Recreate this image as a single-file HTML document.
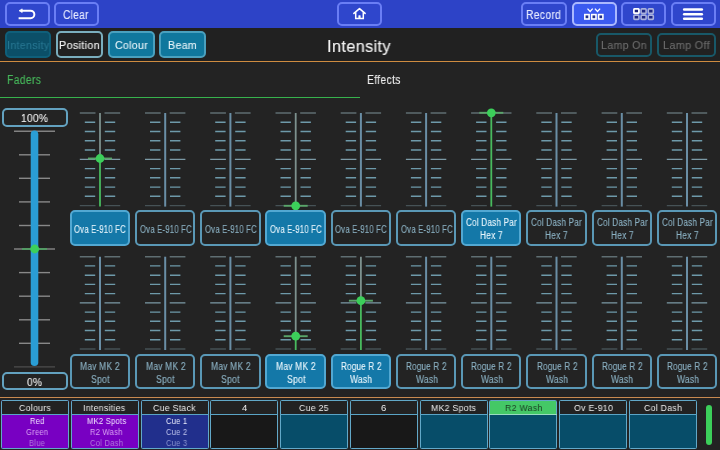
<!DOCTYPE html><html><head><meta charset="utf-8"><style>
*{margin:0;padding:0;box-sizing:border-box}
html,body{width:720px;height:450px;overflow:hidden;background:#232323;font-family:"Liberation Sans", sans-serif}
.a{position:absolute}
.t{position:absolute;white-space:nowrap;transform-origin:0 0;-webkit-text-stroke:0.12px currentColor;will-change:transform}
.tb{position:absolute;border:2px solid #6a7ef5;border-radius:5px;background:#2f46cc}
</style></head><body>
<div class="a" style="left:0;top:0;width:720px;height:28px;background:#2d43c7"></div>
<div class="tb" style="left:4.8px;top:2px;width:45.0px;height:24px;"></div>
<div class="tb" style="left:54px;top:2px;width:45px;height:24px;"></div>
<div class="tb" style="left:337px;top:2px;width:45px;height:24px;"></div>
<div class="tb" style="left:521px;top:2px;width:46px;height:24px;"></div>
<div class="tb" style="left:571.5px;top:2px;width:45.299999999999955px;height:24px;border-color:#aab8ff;background:#3b5af0"></div>
<div class="tb" style="left:620.8px;top:2px;width:45.200000000000045px;height:24px;"></div>
<div class="tb" style="left:670.8px;top:2px;width:45.0px;height:24px;"></div>
<div class="t" style="left:63.39px;top:9.10px;font-size:12px;line-height:12px;color:#e6eaff;letter-spacing:0.35px;transform:scaleX(0.848);">Clear</div>
<div class="t" style="left:526.27px;top:9.00px;font-size:12px;line-height:12px;color:#e6eaff;letter-spacing:0.35px;transform:scaleX(0.860);">Record</div>
<svg class="a" style="left:0;top:0" width="720" height="28">
<path d="M21 10.7 H30.6 A3.75 3.75 0 0 1 30.6 18.2 H18.6" fill="none" stroke="#fff" stroke-width="2"/>
<path d="M19 10.7 L22.2 8.9 L22.2 12.5 Z" fill="#fff" stroke="#fff" stroke-width="0.7" stroke-linejoin="round"/>
<path d="M353.9 13.4 L359.5 8.7 L365.1 13.4" fill="none" stroke="#fff" stroke-width="1.6" stroke-linejoin="round" stroke-linecap="round"/>
<path d="M355.7 12.2 V18.6 H363.3 V12.2" fill="none" stroke="#fff" stroke-width="1.5"/>
<rect x="358.4" y="15.2" width="2.2" height="3.4" rx="0.6" fill="#fff"/>
<g fill="#22308a" stroke="#fff" stroke-width="1.6">
<rect x="584.8" y="14.6" width="4.3" height="4.4"/><rect x="591.7" y="14.6" width="4.3" height="4.4"/><rect x="598.6" y="14.6" width="4.3" height="4.4"/>
</g>
<g fill="none" stroke="#fff" stroke-width="1.3">
<path d="M587.5 8.6 L590.1 11.5 L592.7 8.6"/><path d="M594.9 8.6 L597.5 11.5 L600.1 8.6"/>
</g>
<g fill="#1f2784" stroke="#aab2dc" stroke-width="1.6">
<rect x="633.9" y="8.9" width="5" height="4.3" rx="0.8"/><rect x="641.1" y="8.9" width="5" height="4.3" rx="0.8"/><rect x="648.3" y="8.9" width="5" height="4.3" rx="0.8"/>
<rect x="633.9" y="15.1" width="5" height="4.3" rx="0.8"/><rect x="641.1" y="15.1" width="5" height="4.3" rx="0.8"/><rect x="648.3" y="15.1" width="5" height="4.3" rx="0.8"/>
</g>
<rect x="633.9" y="8.9" width="5" height="4.3" rx="0.8" fill="#1a2078" stroke="#fff" stroke-width="1.7"/>
<g stroke="#fff" stroke-width="2.6" stroke-linecap="round">
<path d="M684.2 9.5 H701.8"/><path d="M684.2 14.2 H701.8"/><path d="M684.2 18.7 H701.8"/>
</g>
</svg>
<div class="a" style="left:0;top:28px;width:720px;height:33px;background:#212121"></div>
<div class="a" style="left:0;top:60.5px;width:720px;height:1.3px;background:#cf8c40"></div>
<div class="a" style="left:4.5px;top:31.1px;width:46.60px;height:26.70px;background:#0b4f68;border:2px solid #0f5f7a;border-radius:5px"></div>
<div class="t" style="left:6.65px;top:39.85px;font-size:11px;line-height:11px;color:#277590;letter-spacing:0.35px;transform:scaleX(0.963);">Intensity</div>
<div class="a" style="left:55.8px;top:31.2px;width:47.50px;height:26.60px;background:#212121;border:2px solid #7aaebe;border-radius:5px"></div>
<div class="t" style="left:59.14px;top:40.15px;font-size:11px;line-height:11px;color:#f2f2f2;letter-spacing:0.35px;transform:scaleX(0.978);">Position</div>
<div class="a" style="left:108px;top:31.2px;width:46.80px;height:26.60px;background:#10779d;border:2px solid #4aa0be;border-radius:5px"></div>
<div class="t" style="left:114.57px;top:40.15px;font-size:11px;line-height:11px;color:#e4f2f8;letter-spacing:0.35px;transform:scaleX(0.957);">Colour</div>
<div class="a" style="left:159px;top:31.2px;width:46.60px;height:26.60px;background:#10779d;border:2px solid #4aa0be;border-radius:5px"></div>
<div class="t" style="left:167.75px;top:40.15px;font-size:11px;line-height:11px;color:#e4f2f8;letter-spacing:0.35px;transform:scaleX(0.967);">Beam</div>
<div class="t" style="left:326.83px;top:37.98px;font-size:16.5px;line-height:16.5px;color:#f2f2f2;letter-spacing:0.35px;transform:scaleX(0.989);">Intensity</div>
<div class="a" style="left:596px;top:33px;width:56.30px;height:23.80px;background:#212121;border:2px solid #185868;border-radius:5px"></div>
<div class="t" style="left:601.15px;top:40.45px;font-size:11px;line-height:11px;color:#6c6c6c;letter-spacing:0.35px;transform:scaleX(0.965);">Lamp On</div>
<div class="a" style="left:656.8px;top:33px;width:59.00px;height:23.80px;background:#212121;border:2px solid #185868;border-radius:5px"></div>
<div class="t" style="left:662.84px;top:40.45px;font-size:11px;line-height:11px;color:#6c6c6c;letter-spacing:0.35px;transform:scaleX(0.983);">Lamp Off</div>
<div class="t" style="left:6.57px;top:73.90px;font-size:12px;line-height:12px;color:#46b65a;letter-spacing:0.35px;transform:scaleX(0.868);">Faders</div>
<div class="t" style="left:366.87px;top:73.90px;font-size:12px;line-height:12px;color:#ececec;letter-spacing:0.35px;transform:scaleX(0.866);">Effects</div>
<div class="a" style="left:0;top:96.5px;width:360px;height:1.6px;background:#37b24d"></div>
<div class="a" style="left:2px;top:108px;width:66.00px;height:19.00px;background:#232323;border:2px solid #63a2c0;border-radius:5px"></div>
<div class="t" style="left:21.34px;top:112.82px;font-size:11.5px;line-height:11.5px;color:#efefef;letter-spacing:0.35px;transform:scaleX(0.883);">100%</div>
<div class="a" style="left:2px;top:371.8px;width:65.80px;height:18.00px;background:#232323;border:2px solid #63a2c0;border-radius:5px"></div>
<div class="t" style="left:27.49px;top:376.53px;font-size:11.5px;line-height:11.5px;color:#efefef;letter-spacing:0.35px;transform:scaleX(0.882);">0%</div>
<svg class="a" style="left:0;top:0" width="720" height="450">
<path d="M14 131.2 H55" stroke="#828282" stroke-width="1.4"/>
<path d="M19 154.8 H50" stroke="#888888" stroke-width="1.4"/>
<path d="M19 178.3 H50" stroke="#888888" stroke-width="1.4"/>
<path d="M19 201.9 H50" stroke="#888888" stroke-width="1.4"/>
<path d="M19 225.5 H50" stroke="#888888" stroke-width="1.4"/>
<path d="M14 249.0 H55" stroke="#828282" stroke-width="1.4"/>
<path d="M19 272.6 H50" stroke="#888888" stroke-width="1.4"/>
<path d="M19 296.2 H50" stroke="#888888" stroke-width="1.4"/>
<path d="M19 319.8 H50" stroke="#888888" stroke-width="1.4"/>
<path d="M19 343.3 H50" stroke="#888888" stroke-width="1.4"/>
<path d="M14 366.9 H55" stroke="#4e4e4e" stroke-width="1.4"/>
<path d="M34.5 134.2 V362.2" stroke="#2a9dd4" stroke-width="7.6" stroke-linecap="round"/>
<path d="M22 249 H47" stroke="#4fa865" stroke-width="1.6"/>
<circle cx="34.7" cy="249" r="4.4" fill="#3ccf5a"/>
<path d="M79.8 113.0 H95.5 M104.5 113.0 H120.2" stroke="#5f6e72" stroke-width="1.5"/>
<path d="M84.8 122.3 H95.2 M104.8 122.3 H115.2" stroke="#6e9aaa" stroke-width="1.4"/>
<path d="M84.8 131.5 H95.2 M104.8 131.5 H115.2" stroke="#6e9aaa" stroke-width="1.4"/>
<path d="M84.8 140.8 H95.2 M104.8 140.8 H115.2" stroke="#6e9aaa" stroke-width="1.4"/>
<path d="M84.8 150.0 H95.2 M104.8 150.0 H115.2" stroke="#6e9aaa" stroke-width="1.4"/>
<path d="M79.8 159.3 H95.5 M104.5 159.3 H120.2" stroke="#7c9aa6" stroke-width="1.2"/>
<path d="M84.8 168.6 H95.2 M104.8 168.6 H115.2" stroke="#6e9aaa" stroke-width="1.4"/>
<path d="M84.8 177.8 H95.2 M104.8 177.8 H115.2" stroke="#6e9aaa" stroke-width="1.4"/>
<path d="M84.8 187.1 H95.2 M104.8 187.1 H115.2" stroke="#6e9aaa" stroke-width="1.4"/>
<path d="M84.8 196.3 H95.2 M104.8 196.3 H115.2" stroke="#6e9aaa" stroke-width="1.4"/>
<path d="M79.8 205.6 H95.5 M104.5 205.6 H120.2" stroke="#465256" stroke-width="1.3"/>
<path d="M100.0 113.0 V158.5" stroke="#7d918e" stroke-width="1.8"/>
<path d="M100.0 158.5 V206.6" stroke="#48ba5e" stroke-width="1.8"/>
<path d="M88.0 158.5 H112.0" stroke="#5aa56a" stroke-width="1.9"/>
<circle cx="100.0" cy="158.5" r="4.4" fill="#3ccf5a"/>
<path d="M79.8 256.7 H95.5 M104.5 256.7 H120.2" stroke="#5f6e72" stroke-width="1.5"/>
<path d="M84.8 265.9 H95.2 M104.8 265.9 H115.2" stroke="#6e9aaa" stroke-width="1.4"/>
<path d="M84.8 275.2 H95.2 M104.8 275.2 H115.2" stroke="#6e9aaa" stroke-width="1.4"/>
<path d="M84.8 284.4 H95.2 M104.8 284.4 H115.2" stroke="#6e9aaa" stroke-width="1.4"/>
<path d="M84.8 293.6 H95.2 M104.8 293.6 H115.2" stroke="#6e9aaa" stroke-width="1.4"/>
<path d="M79.8 302.9 H95.5 M104.5 302.9 H120.2" stroke="#7c9aa6" stroke-width="1.2"/>
<path d="M84.8 312.1 H95.2 M104.8 312.1 H115.2" stroke="#6e9aaa" stroke-width="1.4"/>
<path d="M84.8 321.3 H95.2 M104.8 321.3 H115.2" stroke="#6e9aaa" stroke-width="1.4"/>
<path d="M84.8 330.5 H95.2 M104.8 330.5 H115.2" stroke="#6e9aaa" stroke-width="1.4"/>
<path d="M84.8 339.8 H95.2 M104.8 339.8 H115.2" stroke="#6e9aaa" stroke-width="1.4"/>
<path d="M79.8 349.0 H95.5 M104.5 349.0 H120.2" stroke="#465256" stroke-width="1.3"/>
<path d="M100.0 256.7 V350.0" stroke="#6a8ea5" stroke-width="2"/>
<path d="M145.0 113.0 H160.7 M169.7 113.0 H185.4" stroke="#5f6e72" stroke-width="1.5"/>
<path d="M150.0 122.3 H160.4 M170.0 122.3 H180.4" stroke="#6e9aaa" stroke-width="1.4"/>
<path d="M150.0 131.5 H160.4 M170.0 131.5 H180.4" stroke="#6e9aaa" stroke-width="1.4"/>
<path d="M150.0 140.8 H160.4 M170.0 140.8 H180.4" stroke="#6e9aaa" stroke-width="1.4"/>
<path d="M150.0 150.0 H160.4 M170.0 150.0 H180.4" stroke="#6e9aaa" stroke-width="1.4"/>
<path d="M145.0 159.3 H160.7 M169.7 159.3 H185.4" stroke="#7c9aa6" stroke-width="1.2"/>
<path d="M150.0 168.6 H160.4 M170.0 168.6 H180.4" stroke="#6e9aaa" stroke-width="1.4"/>
<path d="M150.0 177.8 H160.4 M170.0 177.8 H180.4" stroke="#6e9aaa" stroke-width="1.4"/>
<path d="M150.0 187.1 H160.4 M170.0 187.1 H180.4" stroke="#6e9aaa" stroke-width="1.4"/>
<path d="M150.0 196.3 H160.4 M170.0 196.3 H180.4" stroke="#6e9aaa" stroke-width="1.4"/>
<path d="M145.0 205.6 H160.7 M169.7 205.6 H185.4" stroke="#465256" stroke-width="1.3"/>
<path d="M165.2 113.0 V206.6" stroke="#6a8ea5" stroke-width="2"/>
<path d="M145.0 256.7 H160.7 M169.7 256.7 H185.4" stroke="#5f6e72" stroke-width="1.5"/>
<path d="M150.0 265.9 H160.4 M170.0 265.9 H180.4" stroke="#6e9aaa" stroke-width="1.4"/>
<path d="M150.0 275.2 H160.4 M170.0 275.2 H180.4" stroke="#6e9aaa" stroke-width="1.4"/>
<path d="M150.0 284.4 H160.4 M170.0 284.4 H180.4" stroke="#6e9aaa" stroke-width="1.4"/>
<path d="M150.0 293.6 H160.4 M170.0 293.6 H180.4" stroke="#6e9aaa" stroke-width="1.4"/>
<path d="M145.0 302.9 H160.7 M169.7 302.9 H185.4" stroke="#7c9aa6" stroke-width="1.2"/>
<path d="M150.0 312.1 H160.4 M170.0 312.1 H180.4" stroke="#6e9aaa" stroke-width="1.4"/>
<path d="M150.0 321.3 H160.4 M170.0 321.3 H180.4" stroke="#6e9aaa" stroke-width="1.4"/>
<path d="M150.0 330.5 H160.4 M170.0 330.5 H180.4" stroke="#6e9aaa" stroke-width="1.4"/>
<path d="M150.0 339.8 H160.4 M170.0 339.8 H180.4" stroke="#6e9aaa" stroke-width="1.4"/>
<path d="M145.0 349.0 H160.7 M169.7 349.0 H185.4" stroke="#465256" stroke-width="1.3"/>
<path d="M165.2 256.7 V350.0" stroke="#6a8ea5" stroke-width="2"/>
<path d="M210.2 113.0 H225.9 M234.9 113.0 H250.6" stroke="#5f6e72" stroke-width="1.5"/>
<path d="M215.2 122.3 H225.6 M235.2 122.3 H245.6" stroke="#6e9aaa" stroke-width="1.4"/>
<path d="M215.2 131.5 H225.6 M235.2 131.5 H245.6" stroke="#6e9aaa" stroke-width="1.4"/>
<path d="M215.2 140.8 H225.6 M235.2 140.8 H245.6" stroke="#6e9aaa" stroke-width="1.4"/>
<path d="M215.2 150.0 H225.6 M235.2 150.0 H245.6" stroke="#6e9aaa" stroke-width="1.4"/>
<path d="M210.2 159.3 H225.9 M234.9 159.3 H250.6" stroke="#7c9aa6" stroke-width="1.2"/>
<path d="M215.2 168.6 H225.6 M235.2 168.6 H245.6" stroke="#6e9aaa" stroke-width="1.4"/>
<path d="M215.2 177.8 H225.6 M235.2 177.8 H245.6" stroke="#6e9aaa" stroke-width="1.4"/>
<path d="M215.2 187.1 H225.6 M235.2 187.1 H245.6" stroke="#6e9aaa" stroke-width="1.4"/>
<path d="M215.2 196.3 H225.6 M235.2 196.3 H245.6" stroke="#6e9aaa" stroke-width="1.4"/>
<path d="M210.2 205.6 H225.9 M234.9 205.6 H250.6" stroke="#465256" stroke-width="1.3"/>
<path d="M230.4 113.0 V206.6" stroke="#6a8ea5" stroke-width="2"/>
<path d="M210.2 256.7 H225.9 M234.9 256.7 H250.6" stroke="#5f6e72" stroke-width="1.5"/>
<path d="M215.2 265.9 H225.6 M235.2 265.9 H245.6" stroke="#6e9aaa" stroke-width="1.4"/>
<path d="M215.2 275.2 H225.6 M235.2 275.2 H245.6" stroke="#6e9aaa" stroke-width="1.4"/>
<path d="M215.2 284.4 H225.6 M235.2 284.4 H245.6" stroke="#6e9aaa" stroke-width="1.4"/>
<path d="M215.2 293.6 H225.6 M235.2 293.6 H245.6" stroke="#6e9aaa" stroke-width="1.4"/>
<path d="M210.2 302.9 H225.9 M234.9 302.9 H250.6" stroke="#7c9aa6" stroke-width="1.2"/>
<path d="M215.2 312.1 H225.6 M235.2 312.1 H245.6" stroke="#6e9aaa" stroke-width="1.4"/>
<path d="M215.2 321.3 H225.6 M235.2 321.3 H245.6" stroke="#6e9aaa" stroke-width="1.4"/>
<path d="M215.2 330.5 H225.6 M235.2 330.5 H245.6" stroke="#6e9aaa" stroke-width="1.4"/>
<path d="M215.2 339.8 H225.6 M235.2 339.8 H245.6" stroke="#6e9aaa" stroke-width="1.4"/>
<path d="M210.2 349.0 H225.9 M234.9 349.0 H250.6" stroke="#465256" stroke-width="1.3"/>
<path d="M230.4 256.7 V350.0" stroke="#6a8ea5" stroke-width="2"/>
<path d="M275.5 113.0 H291.2 M300.2 113.0 H315.9" stroke="#5f6e72" stroke-width="1.5"/>
<path d="M280.5 122.3 H290.9 M300.5 122.3 H310.9" stroke="#6e9aaa" stroke-width="1.4"/>
<path d="M280.5 131.5 H290.9 M300.5 131.5 H310.9" stroke="#6e9aaa" stroke-width="1.4"/>
<path d="M280.5 140.8 H290.9 M300.5 140.8 H310.9" stroke="#6e9aaa" stroke-width="1.4"/>
<path d="M280.5 150.0 H290.9 M300.5 150.0 H310.9" stroke="#6e9aaa" stroke-width="1.4"/>
<path d="M275.5 159.3 H291.2 M300.2 159.3 H315.9" stroke="#7c9aa6" stroke-width="1.2"/>
<path d="M280.5 168.6 H290.9 M300.5 168.6 H310.9" stroke="#6e9aaa" stroke-width="1.4"/>
<path d="M280.5 177.8 H290.9 M300.5 177.8 H310.9" stroke="#6e9aaa" stroke-width="1.4"/>
<path d="M280.5 187.1 H290.9 M300.5 187.1 H310.9" stroke="#6e9aaa" stroke-width="1.4"/>
<path d="M280.5 196.3 H290.9 M300.5 196.3 H310.9" stroke="#6e9aaa" stroke-width="1.4"/>
<path d="M275.5 205.6 H291.2 M300.2 205.6 H315.9" stroke="#465256" stroke-width="1.3"/>
<path d="M295.7 113.0 V205.8" stroke="#7d918e" stroke-width="1.8"/>
<path d="M295.7 205.8 V206.6" stroke="#48ba5e" stroke-width="1.8"/>
<path d="M283.7 205.8 H307.7" stroke="#5aa56a" stroke-width="1.9"/>
<circle cx="295.7" cy="205.8" r="4.4" fill="#3ccf5a"/>
<path d="M275.5 256.7 H291.2 M300.2 256.7 H315.9" stroke="#5f6e72" stroke-width="1.5"/>
<path d="M280.5 265.9 H290.9 M300.5 265.9 H310.9" stroke="#6e9aaa" stroke-width="1.4"/>
<path d="M280.5 275.2 H290.9 M300.5 275.2 H310.9" stroke="#6e9aaa" stroke-width="1.4"/>
<path d="M280.5 284.4 H290.9 M300.5 284.4 H310.9" stroke="#6e9aaa" stroke-width="1.4"/>
<path d="M280.5 293.6 H290.9 M300.5 293.6 H310.9" stroke="#6e9aaa" stroke-width="1.4"/>
<path d="M275.5 302.9 H291.2 M300.2 302.9 H315.9" stroke="#7c9aa6" stroke-width="1.2"/>
<path d="M280.5 312.1 H290.9 M300.5 312.1 H310.9" stroke="#6e9aaa" stroke-width="1.4"/>
<path d="M280.5 321.3 H290.9 M300.5 321.3 H310.9" stroke="#6e9aaa" stroke-width="1.4"/>
<path d="M280.5 330.5 H290.9 M300.5 330.5 H310.9" stroke="#6e9aaa" stroke-width="1.4"/>
<path d="M280.5 339.8 H290.9 M300.5 339.8 H310.9" stroke="#6e9aaa" stroke-width="1.4"/>
<path d="M275.5 349.0 H291.2 M300.2 349.0 H315.9" stroke="#465256" stroke-width="1.3"/>
<path d="M295.7 256.7 V336.2" stroke="#7d918e" stroke-width="1.8"/>
<path d="M295.7 336.2 V350.0" stroke="#48ba5e" stroke-width="1.8"/>
<path d="M283.7 336.2 H307.7" stroke="#5aa56a" stroke-width="1.9"/>
<circle cx="295.7" cy="336.2" r="4.4" fill="#3ccf5a"/>
<path d="M340.7 113.0 H356.4 M365.4 113.0 H381.1" stroke="#5f6e72" stroke-width="1.5"/>
<path d="M345.7 122.3 H356.1 M365.7 122.3 H376.1" stroke="#6e9aaa" stroke-width="1.4"/>
<path d="M345.7 131.5 H356.1 M365.7 131.5 H376.1" stroke="#6e9aaa" stroke-width="1.4"/>
<path d="M345.7 140.8 H356.1 M365.7 140.8 H376.1" stroke="#6e9aaa" stroke-width="1.4"/>
<path d="M345.7 150.0 H356.1 M365.7 150.0 H376.1" stroke="#6e9aaa" stroke-width="1.4"/>
<path d="M340.7 159.3 H356.4 M365.4 159.3 H381.1" stroke="#7c9aa6" stroke-width="1.2"/>
<path d="M345.7 168.6 H356.1 M365.7 168.6 H376.1" stroke="#6e9aaa" stroke-width="1.4"/>
<path d="M345.7 177.8 H356.1 M365.7 177.8 H376.1" stroke="#6e9aaa" stroke-width="1.4"/>
<path d="M345.7 187.1 H356.1 M365.7 187.1 H376.1" stroke="#6e9aaa" stroke-width="1.4"/>
<path d="M345.7 196.3 H356.1 M365.7 196.3 H376.1" stroke="#6e9aaa" stroke-width="1.4"/>
<path d="M340.7 205.6 H356.4 M365.4 205.6 H381.1" stroke="#465256" stroke-width="1.3"/>
<path d="M360.9 113.0 V206.6" stroke="#6a8ea5" stroke-width="2"/>
<path d="M340.7 256.7 H356.4 M365.4 256.7 H381.1" stroke="#5f6e72" stroke-width="1.5"/>
<path d="M345.7 265.9 H356.1 M365.7 265.9 H376.1" stroke="#6e9aaa" stroke-width="1.4"/>
<path d="M345.7 275.2 H356.1 M365.7 275.2 H376.1" stroke="#6e9aaa" stroke-width="1.4"/>
<path d="M345.7 284.4 H356.1 M365.7 284.4 H376.1" stroke="#6e9aaa" stroke-width="1.4"/>
<path d="M345.7 293.6 H356.1 M365.7 293.6 H376.1" stroke="#6e9aaa" stroke-width="1.4"/>
<path d="M340.7 302.9 H356.4 M365.4 302.9 H381.1" stroke="#7c9aa6" stroke-width="1.2"/>
<path d="M345.7 312.1 H356.1 M365.7 312.1 H376.1" stroke="#6e9aaa" stroke-width="1.4"/>
<path d="M345.7 321.3 H356.1 M365.7 321.3 H376.1" stroke="#6e9aaa" stroke-width="1.4"/>
<path d="M345.7 330.5 H356.1 M365.7 330.5 H376.1" stroke="#6e9aaa" stroke-width="1.4"/>
<path d="M345.7 339.8 H356.1 M365.7 339.8 H376.1" stroke="#6e9aaa" stroke-width="1.4"/>
<path d="M340.7 349.0 H356.4 M365.4 349.0 H381.1" stroke="#465256" stroke-width="1.3"/>
<path d="M360.9 256.7 V300.7" stroke="#7d918e" stroke-width="1.8"/>
<path d="M360.9 300.7 V350.0" stroke="#48ba5e" stroke-width="1.8"/>
<path d="M348.9 300.7 H372.9" stroke="#5aa56a" stroke-width="1.9"/>
<circle cx="360.9" cy="300.7" r="4.4" fill="#3ccf5a"/>
<path d="M405.9 113.0 H421.6 M430.6 113.0 H446.3" stroke="#5f6e72" stroke-width="1.5"/>
<path d="M410.9 122.3 H421.3 M430.9 122.3 H441.3" stroke="#6e9aaa" stroke-width="1.4"/>
<path d="M410.9 131.5 H421.3 M430.9 131.5 H441.3" stroke="#6e9aaa" stroke-width="1.4"/>
<path d="M410.9 140.8 H421.3 M430.9 140.8 H441.3" stroke="#6e9aaa" stroke-width="1.4"/>
<path d="M410.9 150.0 H421.3 M430.9 150.0 H441.3" stroke="#6e9aaa" stroke-width="1.4"/>
<path d="M405.9 159.3 H421.6 M430.6 159.3 H446.3" stroke="#7c9aa6" stroke-width="1.2"/>
<path d="M410.9 168.6 H421.3 M430.9 168.6 H441.3" stroke="#6e9aaa" stroke-width="1.4"/>
<path d="M410.9 177.8 H421.3 M430.9 177.8 H441.3" stroke="#6e9aaa" stroke-width="1.4"/>
<path d="M410.9 187.1 H421.3 M430.9 187.1 H441.3" stroke="#6e9aaa" stroke-width="1.4"/>
<path d="M410.9 196.3 H421.3 M430.9 196.3 H441.3" stroke="#6e9aaa" stroke-width="1.4"/>
<path d="M405.9 205.6 H421.6 M430.6 205.6 H446.3" stroke="#465256" stroke-width="1.3"/>
<path d="M426.1 113.0 V206.6" stroke="#6a8ea5" stroke-width="2"/>
<path d="M405.9 256.7 H421.6 M430.6 256.7 H446.3" stroke="#5f6e72" stroke-width="1.5"/>
<path d="M410.9 265.9 H421.3 M430.9 265.9 H441.3" stroke="#6e9aaa" stroke-width="1.4"/>
<path d="M410.9 275.2 H421.3 M430.9 275.2 H441.3" stroke="#6e9aaa" stroke-width="1.4"/>
<path d="M410.9 284.4 H421.3 M430.9 284.4 H441.3" stroke="#6e9aaa" stroke-width="1.4"/>
<path d="M410.9 293.6 H421.3 M430.9 293.6 H441.3" stroke="#6e9aaa" stroke-width="1.4"/>
<path d="M405.9 302.9 H421.6 M430.6 302.9 H446.3" stroke="#7c9aa6" stroke-width="1.2"/>
<path d="M410.9 312.1 H421.3 M430.9 312.1 H441.3" stroke="#6e9aaa" stroke-width="1.4"/>
<path d="M410.9 321.3 H421.3 M430.9 321.3 H441.3" stroke="#6e9aaa" stroke-width="1.4"/>
<path d="M410.9 330.5 H421.3 M430.9 330.5 H441.3" stroke="#6e9aaa" stroke-width="1.4"/>
<path d="M410.9 339.8 H421.3 M430.9 339.8 H441.3" stroke="#6e9aaa" stroke-width="1.4"/>
<path d="M405.9 349.0 H421.6 M430.6 349.0 H446.3" stroke="#465256" stroke-width="1.3"/>
<path d="M426.1 256.7 V350.0" stroke="#6a8ea5" stroke-width="2"/>
<path d="M471.1 113.0 H486.8 M495.8 113.0 H511.5" stroke="#5f6e72" stroke-width="1.5"/>
<path d="M476.1 122.3 H486.5 M496.1 122.3 H506.5" stroke="#6e9aaa" stroke-width="1.4"/>
<path d="M476.1 131.5 H486.5 M496.1 131.5 H506.5" stroke="#6e9aaa" stroke-width="1.4"/>
<path d="M476.1 140.8 H486.5 M496.1 140.8 H506.5" stroke="#6e9aaa" stroke-width="1.4"/>
<path d="M476.1 150.0 H486.5 M496.1 150.0 H506.5" stroke="#6e9aaa" stroke-width="1.4"/>
<path d="M471.1 159.3 H486.8 M495.8 159.3 H511.5" stroke="#7c9aa6" stroke-width="1.2"/>
<path d="M476.1 168.6 H486.5 M496.1 168.6 H506.5" stroke="#6e9aaa" stroke-width="1.4"/>
<path d="M476.1 177.8 H486.5 M496.1 177.8 H506.5" stroke="#6e9aaa" stroke-width="1.4"/>
<path d="M476.1 187.1 H486.5 M496.1 187.1 H506.5" stroke="#6e9aaa" stroke-width="1.4"/>
<path d="M476.1 196.3 H486.5 M496.1 196.3 H506.5" stroke="#6e9aaa" stroke-width="1.4"/>
<path d="M471.1 205.6 H486.8 M495.8 205.6 H511.5" stroke="#465256" stroke-width="1.3"/>
<path d="M491.3 113.0 V112.8" stroke="#7d918e" stroke-width="1.8"/>
<path d="M491.3 112.8 V206.6" stroke="#48ba5e" stroke-width="1.8"/>
<path d="M479.3 112.8 H503.3" stroke="#5aa56a" stroke-width="1.9"/>
<circle cx="491.3" cy="112.8" r="4.4" fill="#3ccf5a"/>
<path d="M471.1 256.7 H486.8 M495.8 256.7 H511.5" stroke="#5f6e72" stroke-width="1.5"/>
<path d="M476.1 265.9 H486.5 M496.1 265.9 H506.5" stroke="#6e9aaa" stroke-width="1.4"/>
<path d="M476.1 275.2 H486.5 M496.1 275.2 H506.5" stroke="#6e9aaa" stroke-width="1.4"/>
<path d="M476.1 284.4 H486.5 M496.1 284.4 H506.5" stroke="#6e9aaa" stroke-width="1.4"/>
<path d="M476.1 293.6 H486.5 M496.1 293.6 H506.5" stroke="#6e9aaa" stroke-width="1.4"/>
<path d="M471.1 302.9 H486.8 M495.8 302.9 H511.5" stroke="#7c9aa6" stroke-width="1.2"/>
<path d="M476.1 312.1 H486.5 M496.1 312.1 H506.5" stroke="#6e9aaa" stroke-width="1.4"/>
<path d="M476.1 321.3 H486.5 M496.1 321.3 H506.5" stroke="#6e9aaa" stroke-width="1.4"/>
<path d="M476.1 330.5 H486.5 M496.1 330.5 H506.5" stroke="#6e9aaa" stroke-width="1.4"/>
<path d="M476.1 339.8 H486.5 M496.1 339.8 H506.5" stroke="#6e9aaa" stroke-width="1.4"/>
<path d="M471.1 349.0 H486.8 M495.8 349.0 H511.5" stroke="#465256" stroke-width="1.3"/>
<path d="M491.3 256.7 V350.0" stroke="#6a8ea5" stroke-width="2"/>
<path d="M536.3 113.0 H552.0 M561.0 113.0 H576.7" stroke="#5f6e72" stroke-width="1.5"/>
<path d="M541.3 122.3 H551.7 M561.3 122.3 H571.7" stroke="#6e9aaa" stroke-width="1.4"/>
<path d="M541.3 131.5 H551.7 M561.3 131.5 H571.7" stroke="#6e9aaa" stroke-width="1.4"/>
<path d="M541.3 140.8 H551.7 M561.3 140.8 H571.7" stroke="#6e9aaa" stroke-width="1.4"/>
<path d="M541.3 150.0 H551.7 M561.3 150.0 H571.7" stroke="#6e9aaa" stroke-width="1.4"/>
<path d="M536.3 159.3 H552.0 M561.0 159.3 H576.7" stroke="#7c9aa6" stroke-width="1.2"/>
<path d="M541.3 168.6 H551.7 M561.3 168.6 H571.7" stroke="#6e9aaa" stroke-width="1.4"/>
<path d="M541.3 177.8 H551.7 M561.3 177.8 H571.7" stroke="#6e9aaa" stroke-width="1.4"/>
<path d="M541.3 187.1 H551.7 M561.3 187.1 H571.7" stroke="#6e9aaa" stroke-width="1.4"/>
<path d="M541.3 196.3 H551.7 M561.3 196.3 H571.7" stroke="#6e9aaa" stroke-width="1.4"/>
<path d="M536.3 205.6 H552.0 M561.0 205.6 H576.7" stroke="#465256" stroke-width="1.3"/>
<path d="M556.5 113.0 V206.6" stroke="#6a8ea5" stroke-width="2"/>
<path d="M536.3 256.7 H552.0 M561.0 256.7 H576.7" stroke="#5f6e72" stroke-width="1.5"/>
<path d="M541.3 265.9 H551.7 M561.3 265.9 H571.7" stroke="#6e9aaa" stroke-width="1.4"/>
<path d="M541.3 275.2 H551.7 M561.3 275.2 H571.7" stroke="#6e9aaa" stroke-width="1.4"/>
<path d="M541.3 284.4 H551.7 M561.3 284.4 H571.7" stroke="#6e9aaa" stroke-width="1.4"/>
<path d="M541.3 293.6 H551.7 M561.3 293.6 H571.7" stroke="#6e9aaa" stroke-width="1.4"/>
<path d="M536.3 302.9 H552.0 M561.0 302.9 H576.7" stroke="#7c9aa6" stroke-width="1.2"/>
<path d="M541.3 312.1 H551.7 M561.3 312.1 H571.7" stroke="#6e9aaa" stroke-width="1.4"/>
<path d="M541.3 321.3 H551.7 M561.3 321.3 H571.7" stroke="#6e9aaa" stroke-width="1.4"/>
<path d="M541.3 330.5 H551.7 M561.3 330.5 H571.7" stroke="#6e9aaa" stroke-width="1.4"/>
<path d="M541.3 339.8 H551.7 M561.3 339.8 H571.7" stroke="#6e9aaa" stroke-width="1.4"/>
<path d="M536.3 349.0 H552.0 M561.0 349.0 H576.7" stroke="#465256" stroke-width="1.3"/>
<path d="M556.5 256.7 V350.0" stroke="#6a8ea5" stroke-width="2"/>
<path d="M601.6 113.0 H617.3 M626.3 113.0 H642.0" stroke="#5f6e72" stroke-width="1.5"/>
<path d="M606.6 122.3 H617.0 M626.6 122.3 H637.0" stroke="#6e9aaa" stroke-width="1.4"/>
<path d="M606.6 131.5 H617.0 M626.6 131.5 H637.0" stroke="#6e9aaa" stroke-width="1.4"/>
<path d="M606.6 140.8 H617.0 M626.6 140.8 H637.0" stroke="#6e9aaa" stroke-width="1.4"/>
<path d="M606.6 150.0 H617.0 M626.6 150.0 H637.0" stroke="#6e9aaa" stroke-width="1.4"/>
<path d="M601.6 159.3 H617.3 M626.3 159.3 H642.0" stroke="#7c9aa6" stroke-width="1.2"/>
<path d="M606.6 168.6 H617.0 M626.6 168.6 H637.0" stroke="#6e9aaa" stroke-width="1.4"/>
<path d="M606.6 177.8 H617.0 M626.6 177.8 H637.0" stroke="#6e9aaa" stroke-width="1.4"/>
<path d="M606.6 187.1 H617.0 M626.6 187.1 H637.0" stroke="#6e9aaa" stroke-width="1.4"/>
<path d="M606.6 196.3 H617.0 M626.6 196.3 H637.0" stroke="#6e9aaa" stroke-width="1.4"/>
<path d="M601.6 205.6 H617.3 M626.3 205.6 H642.0" stroke="#465256" stroke-width="1.3"/>
<path d="M621.8 113.0 V206.6" stroke="#6a8ea5" stroke-width="2"/>
<path d="M601.6 256.7 H617.3 M626.3 256.7 H642.0" stroke="#5f6e72" stroke-width="1.5"/>
<path d="M606.6 265.9 H617.0 M626.6 265.9 H637.0" stroke="#6e9aaa" stroke-width="1.4"/>
<path d="M606.6 275.2 H617.0 M626.6 275.2 H637.0" stroke="#6e9aaa" stroke-width="1.4"/>
<path d="M606.6 284.4 H617.0 M626.6 284.4 H637.0" stroke="#6e9aaa" stroke-width="1.4"/>
<path d="M606.6 293.6 H617.0 M626.6 293.6 H637.0" stroke="#6e9aaa" stroke-width="1.4"/>
<path d="M601.6 302.9 H617.3 M626.3 302.9 H642.0" stroke="#7c9aa6" stroke-width="1.2"/>
<path d="M606.6 312.1 H617.0 M626.6 312.1 H637.0" stroke="#6e9aaa" stroke-width="1.4"/>
<path d="M606.6 321.3 H617.0 M626.6 321.3 H637.0" stroke="#6e9aaa" stroke-width="1.4"/>
<path d="M606.6 330.5 H617.0 M626.6 330.5 H637.0" stroke="#6e9aaa" stroke-width="1.4"/>
<path d="M606.6 339.8 H617.0 M626.6 339.8 H637.0" stroke="#6e9aaa" stroke-width="1.4"/>
<path d="M601.6 349.0 H617.3 M626.3 349.0 H642.0" stroke="#465256" stroke-width="1.3"/>
<path d="M621.8 256.7 V350.0" stroke="#6a8ea5" stroke-width="2"/>
<path d="M666.8 113.0 H682.5 M691.5 113.0 H707.2" stroke="#5f6e72" stroke-width="1.5"/>
<path d="M671.8 122.3 H682.2 M691.8 122.3 H702.2" stroke="#6e9aaa" stroke-width="1.4"/>
<path d="M671.8 131.5 H682.2 M691.8 131.5 H702.2" stroke="#6e9aaa" stroke-width="1.4"/>
<path d="M671.8 140.8 H682.2 M691.8 140.8 H702.2" stroke="#6e9aaa" stroke-width="1.4"/>
<path d="M671.8 150.0 H682.2 M691.8 150.0 H702.2" stroke="#6e9aaa" stroke-width="1.4"/>
<path d="M666.8 159.3 H682.5 M691.5 159.3 H707.2" stroke="#7c9aa6" stroke-width="1.2"/>
<path d="M671.8 168.6 H682.2 M691.8 168.6 H702.2" stroke="#6e9aaa" stroke-width="1.4"/>
<path d="M671.8 177.8 H682.2 M691.8 177.8 H702.2" stroke="#6e9aaa" stroke-width="1.4"/>
<path d="M671.8 187.1 H682.2 M691.8 187.1 H702.2" stroke="#6e9aaa" stroke-width="1.4"/>
<path d="M671.8 196.3 H682.2 M691.8 196.3 H702.2" stroke="#6e9aaa" stroke-width="1.4"/>
<path d="M666.8 205.6 H682.5 M691.5 205.6 H707.2" stroke="#465256" stroke-width="1.3"/>
<path d="M687.0 113.0 V206.6" stroke="#6a8ea5" stroke-width="2"/>
<path d="M666.8 256.7 H682.5 M691.5 256.7 H707.2" stroke="#5f6e72" stroke-width="1.5"/>
<path d="M671.8 265.9 H682.2 M691.8 265.9 H702.2" stroke="#6e9aaa" stroke-width="1.4"/>
<path d="M671.8 275.2 H682.2 M691.8 275.2 H702.2" stroke="#6e9aaa" stroke-width="1.4"/>
<path d="M671.8 284.4 H682.2 M691.8 284.4 H702.2" stroke="#6e9aaa" stroke-width="1.4"/>
<path d="M671.8 293.6 H682.2 M691.8 293.6 H702.2" stroke="#6e9aaa" stroke-width="1.4"/>
<path d="M666.8 302.9 H682.5 M691.5 302.9 H707.2" stroke="#7c9aa6" stroke-width="1.2"/>
<path d="M671.8 312.1 H682.2 M691.8 312.1 H702.2" stroke="#6e9aaa" stroke-width="1.4"/>
<path d="M671.8 321.3 H682.2 M691.8 321.3 H702.2" stroke="#6e9aaa" stroke-width="1.4"/>
<path d="M671.8 330.5 H682.2 M691.8 330.5 H702.2" stroke="#6e9aaa" stroke-width="1.4"/>
<path d="M671.8 339.8 H682.2 M691.8 339.8 H702.2" stroke="#6e9aaa" stroke-width="1.4"/>
<path d="M666.8 349.0 H682.5 M691.5 349.0 H707.2" stroke="#465256" stroke-width="1.3"/>
<path d="M687.0 256.7 V350.0" stroke="#6a8ea5" stroke-width="2"/>
</svg>
<div class="a" style="left:69.80px;top:210.2px;width:60.3px;height:36.00px;background:#1478a8;border:2px solid #52a8d2;border-radius:5px"></div><div class="t" style="left:74.45px;top:224.70px;font-size:10.0px;line-height:10.0px;color:#e6f4fb;letter-spacing:0.3px;transform:scaleX(0.768);-webkit-text-stroke:0.15px currentColor;">Ova E-910 FC</div>
<div class="a" style="left:69.80px;top:353.7px;width:60.3px;height:35.60px;background:#232323;border:2px solid #5a98b6;border-radius:5px"></div><div class="t" style="left:80.38px;top:361.60px;font-size:10.0px;line-height:10.0px;color:#8ab0c2;letter-spacing:0.3px;transform:scaleX(0.841);-webkit-text-stroke:0.15px currentColor;">Mav MK 2</div><div class="t" style="left:90.86px;top:374.50px;font-size:10.0px;line-height:10.0px;color:#8ab0c2;letter-spacing:0.3px;transform:scaleX(0.864);-webkit-text-stroke:0.15px currentColor;">Spot</div>
<div class="a" style="left:135.02px;top:210.2px;width:60.3px;height:36.00px;background:#232323;border:2px solid #5a98b6;border-radius:5px"></div><div class="t" style="left:139.67px;top:224.70px;font-size:10.0px;line-height:10.0px;color:#8ab0c2;letter-spacing:0.3px;transform:scaleX(0.768);-webkit-text-stroke:0.15px currentColor;">Ova E-910 FC</div>
<div class="a" style="left:135.02px;top:353.7px;width:60.3px;height:35.60px;background:#232323;border:2px solid #5a98b6;border-radius:5px"></div><div class="t" style="left:145.60px;top:361.60px;font-size:10.0px;line-height:10.0px;color:#8ab0c2;letter-spacing:0.3px;transform:scaleX(0.841);-webkit-text-stroke:0.15px currentColor;">Mav MK 2</div><div class="t" style="left:156.08px;top:374.50px;font-size:10.0px;line-height:10.0px;color:#8ab0c2;letter-spacing:0.3px;transform:scaleX(0.864);-webkit-text-stroke:0.15px currentColor;">Spot</div>
<div class="a" style="left:200.24px;top:210.2px;width:60.3px;height:36.00px;background:#232323;border:2px solid #5a98b6;border-radius:5px"></div><div class="t" style="left:204.89px;top:224.70px;font-size:10.0px;line-height:10.0px;color:#8ab0c2;letter-spacing:0.3px;transform:scaleX(0.768);-webkit-text-stroke:0.15px currentColor;">Ova E-910 FC</div>
<div class="a" style="left:200.24px;top:353.7px;width:60.3px;height:35.60px;background:#232323;border:2px solid #5a98b6;border-radius:5px"></div><div class="t" style="left:210.82px;top:361.60px;font-size:10.0px;line-height:10.0px;color:#8ab0c2;letter-spacing:0.3px;transform:scaleX(0.841);-webkit-text-stroke:0.15px currentColor;">Mav MK 2</div><div class="t" style="left:221.30px;top:374.50px;font-size:10.0px;line-height:10.0px;color:#8ab0c2;letter-spacing:0.3px;transform:scaleX(0.864);-webkit-text-stroke:0.15px currentColor;">Spot</div>
<div class="a" style="left:265.46px;top:210.2px;width:60.3px;height:36.00px;background:#1478a8;border:2px solid #52a8d2;border-radius:5px"></div><div class="t" style="left:270.11px;top:224.70px;font-size:10.0px;line-height:10.0px;color:#e6f4fb;letter-spacing:0.3px;transform:scaleX(0.768);-webkit-text-stroke:0.15px currentColor;">Ova E-910 FC</div>
<div class="a" style="left:265.46px;top:353.7px;width:60.3px;height:35.60px;background:#1478a8;border:2px solid #52a8d2;border-radius:5px"></div><div class="t" style="left:276.04px;top:361.60px;font-size:10.0px;line-height:10.0px;color:#e6f4fb;letter-spacing:0.3px;transform:scaleX(0.841);-webkit-text-stroke:0.15px currentColor;">Mav MK 2</div><div class="t" style="left:286.52px;top:374.50px;font-size:10.0px;line-height:10.0px;color:#e6f4fb;letter-spacing:0.3px;transform:scaleX(0.864);-webkit-text-stroke:0.15px currentColor;">Spot</div>
<div class="a" style="left:330.68px;top:210.2px;width:60.3px;height:36.00px;background:#232323;border:2px solid #5a98b6;border-radius:5px"></div><div class="t" style="left:335.33px;top:224.70px;font-size:10.0px;line-height:10.0px;color:#8ab0c2;letter-spacing:0.3px;transform:scaleX(0.768);-webkit-text-stroke:0.15px currentColor;">Ova E-910 FC</div>
<div class="a" style="left:330.68px;top:353.7px;width:60.3px;height:35.60px;background:#1478a8;border:2px solid #52a8d2;border-radius:5px"></div><div class="t" style="left:340.84px;top:361.60px;font-size:10.0px;line-height:10.0px;color:#e6f4fb;letter-spacing:0.3px;transform:scaleX(0.806);-webkit-text-stroke:0.15px currentColor;">Rogue R 2</div><div class="t" style="left:350.44px;top:374.50px;font-size:10.0px;line-height:10.0px;color:#e6f4fb;letter-spacing:0.3px;transform:scaleX(0.843);-webkit-text-stroke:0.15px currentColor;">Wash</div>
<div class="a" style="left:395.90px;top:210.2px;width:60.3px;height:36.00px;background:#232323;border:2px solid #5a98b6;border-radius:5px"></div><div class="t" style="left:400.55px;top:224.70px;font-size:10.0px;line-height:10.0px;color:#8ab0c2;letter-spacing:0.3px;transform:scaleX(0.768);-webkit-text-stroke:0.15px currentColor;">Ova E-910 FC</div>
<div class="a" style="left:395.90px;top:353.7px;width:60.3px;height:35.60px;background:#232323;border:2px solid #5a98b6;border-radius:5px"></div><div class="t" style="left:406.06px;top:361.60px;font-size:10.0px;line-height:10.0px;color:#8ab0c2;letter-spacing:0.3px;transform:scaleX(0.806);-webkit-text-stroke:0.15px currentColor;">Rogue R 2</div><div class="t" style="left:415.66px;top:374.50px;font-size:10.0px;line-height:10.0px;color:#8ab0c2;letter-spacing:0.3px;transform:scaleX(0.843);-webkit-text-stroke:0.15px currentColor;">Wash</div>
<div class="a" style="left:461.12px;top:210.2px;width:60.3px;height:36.00px;background:#1478a8;border:2px solid #52a8d2;border-radius:5px"></div><div class="t" style="left:466.17px;top:218.10px;font-size:10.0px;line-height:10.0px;color:#e6f4fb;letter-spacing:0.3px;transform:scaleX(0.807);-webkit-text-stroke:0.15px currentColor;">Col Dash Par</div><div class="t" style="left:480.21px;top:231.00px;font-size:10.0px;line-height:10.0px;color:#e6f4fb;letter-spacing:0.3px;transform:scaleX(0.827);-webkit-text-stroke:0.15px currentColor;">Hex 7</div>
<div class="a" style="left:461.12px;top:353.7px;width:60.3px;height:35.60px;background:#232323;border:2px solid #5a98b6;border-radius:5px"></div><div class="t" style="left:471.28px;top:361.60px;font-size:10.0px;line-height:10.0px;color:#8ab0c2;letter-spacing:0.3px;transform:scaleX(0.806);-webkit-text-stroke:0.15px currentColor;">Rogue R 2</div><div class="t" style="left:480.88px;top:374.50px;font-size:10.0px;line-height:10.0px;color:#8ab0c2;letter-spacing:0.3px;transform:scaleX(0.843);-webkit-text-stroke:0.15px currentColor;">Wash</div>
<div class="a" style="left:526.34px;top:210.2px;width:60.3px;height:36.00px;background:#232323;border:2px solid #5a98b6;border-radius:5px"></div><div class="t" style="left:531.39px;top:218.10px;font-size:10.0px;line-height:10.0px;color:#8ab0c2;letter-spacing:0.3px;transform:scaleX(0.807);-webkit-text-stroke:0.15px currentColor;">Col Dash Par</div><div class="t" style="left:545.43px;top:231.00px;font-size:10.0px;line-height:10.0px;color:#8ab0c2;letter-spacing:0.3px;transform:scaleX(0.827);-webkit-text-stroke:0.15px currentColor;">Hex 7</div>
<div class="a" style="left:526.34px;top:353.7px;width:60.3px;height:35.60px;background:#232323;border:2px solid #5a98b6;border-radius:5px"></div><div class="t" style="left:536.50px;top:361.60px;font-size:10.0px;line-height:10.0px;color:#8ab0c2;letter-spacing:0.3px;transform:scaleX(0.806);-webkit-text-stroke:0.15px currentColor;">Rogue R 2</div><div class="t" style="left:546.10px;top:374.50px;font-size:10.0px;line-height:10.0px;color:#8ab0c2;letter-spacing:0.3px;transform:scaleX(0.843);-webkit-text-stroke:0.15px currentColor;">Wash</div>
<div class="a" style="left:591.56px;top:210.2px;width:60.3px;height:36.00px;background:#232323;border:2px solid #5a98b6;border-radius:5px"></div><div class="t" style="left:596.61px;top:218.10px;font-size:10.0px;line-height:10.0px;color:#8ab0c2;letter-spacing:0.3px;transform:scaleX(0.807);-webkit-text-stroke:0.15px currentColor;">Col Dash Par</div><div class="t" style="left:610.65px;top:231.00px;font-size:10.0px;line-height:10.0px;color:#8ab0c2;letter-spacing:0.3px;transform:scaleX(0.827);-webkit-text-stroke:0.15px currentColor;">Hex 7</div>
<div class="a" style="left:591.56px;top:353.7px;width:60.3px;height:35.60px;background:#232323;border:2px solid #5a98b6;border-radius:5px"></div><div class="t" style="left:601.72px;top:361.60px;font-size:10.0px;line-height:10.0px;color:#8ab0c2;letter-spacing:0.3px;transform:scaleX(0.806);-webkit-text-stroke:0.15px currentColor;">Rogue R 2</div><div class="t" style="left:611.32px;top:374.50px;font-size:10.0px;line-height:10.0px;color:#8ab0c2;letter-spacing:0.3px;transform:scaleX(0.843);-webkit-text-stroke:0.15px currentColor;">Wash</div>
<div class="a" style="left:656.78px;top:210.2px;width:60.3px;height:36.00px;background:#232323;border:2px solid #5a98b6;border-radius:5px"></div><div class="t" style="left:661.83px;top:218.10px;font-size:10.0px;line-height:10.0px;color:#8ab0c2;letter-spacing:0.3px;transform:scaleX(0.807);-webkit-text-stroke:0.15px currentColor;">Col Dash Par</div><div class="t" style="left:675.87px;top:231.00px;font-size:10.0px;line-height:10.0px;color:#8ab0c2;letter-spacing:0.3px;transform:scaleX(0.827);-webkit-text-stroke:0.15px currentColor;">Hex 7</div>
<div class="a" style="left:656.78px;top:353.7px;width:60.3px;height:35.60px;background:#232323;border:2px solid #5a98b6;border-radius:5px"></div><div class="t" style="left:666.94px;top:361.60px;font-size:10.0px;line-height:10.0px;color:#8ab0c2;letter-spacing:0.3px;transform:scaleX(0.806);-webkit-text-stroke:0.15px currentColor;">Rogue R 2</div><div class="t" style="left:676.54px;top:374.50px;font-size:10.0px;line-height:10.0px;color:#8ab0c2;letter-spacing:0.3px;transform:scaleX(0.843);-webkit-text-stroke:0.15px currentColor;">Wash</div>
<div class="a" style="left:0;top:396.8px;width:720px;height:1.3px;background:#c88a50"></div>
<div class="a" style="left:1.00px;top:400px;width:68px;height:48.6px;background:#7800c2;border:1px solid #62a8c8;border-radius:1.5px"></div>
<div class="a" style="left:2.00px;top:401px;width:66px;height:13.3px;background:#222222"></div>
<div class="a" style="left:1.00px;top:414.2px;width:68px;height:1.2px;background:#5aa4c6"></div>
<div class="t" style="left:19.05px;top:403.12px;font-size:9.5px;line-height:9.5px;color:#ececec;letter-spacing:0.3px;transform:scaleX(0.920);-webkit-text-stroke:0.15px currentColor;-webkit-text-stroke:0;">Colours</div>
<div class="t" style="left:29.74px;top:417.19px;font-size:8.6px;line-height:8.6px;color:#f2e6ff;letter-spacing:0.3px;transform:scaleX(0.880);-webkit-text-stroke:0.15px currentColor;-webkit-text-stroke:0;">Red</div>
<div class="t" style="left:26.01px;top:428.14px;font-size:8.6px;line-height:8.6px;color:#d8a0f2;letter-spacing:0.3px;transform:scaleX(0.880);-webkit-text-stroke:0.15px currentColor;-webkit-text-stroke:0;">Green</div>
<div class="t" style="left:28.90px;top:439.09px;font-size:8.6px;line-height:8.6px;color:#b27ade;letter-spacing:0.3px;transform:scaleX(0.880);-webkit-text-stroke:0.15px currentColor;-webkit-text-stroke:0;">Blue</div>
<div class="a" style="left:70.75px;top:400px;width:68px;height:48.6px;background:#7800c2;border:1px solid #62a8c8;border-radius:1.5px"></div>
<div class="a" style="left:71.75px;top:401px;width:66px;height:13.3px;background:#222222"></div>
<div class="a" style="left:70.75px;top:414.2px;width:68px;height:1.2px;background:#5aa4c6"></div>
<div class="t" style="left:83.44px;top:403.12px;font-size:9.5px;line-height:9.5px;color:#ececec;letter-spacing:0.3px;transform:scaleX(0.920);-webkit-text-stroke:0.15px currentColor;-webkit-text-stroke:0;">Intensities</div>
<div class="t" style="left:87.02px;top:417.19px;font-size:8.6px;line-height:8.6px;color:#f2e6ff;letter-spacing:0.3px;transform:scaleX(0.880);-webkit-text-stroke:0.15px currentColor;-webkit-text-stroke:0;">MK2 Spots</div>
<div class="t" style="left:90.48px;top:428.14px;font-size:8.6px;line-height:8.6px;color:#d8a0f2;letter-spacing:0.3px;transform:scaleX(0.880);-webkit-text-stroke:0.15px currentColor;-webkit-text-stroke:0;">R2 Wash</div>
<div class="t" style="left:90.33px;top:439.09px;font-size:8.6px;line-height:8.6px;color:#b27ade;letter-spacing:0.3px;transform:scaleX(0.880);-webkit-text-stroke:0.15px currentColor;-webkit-text-stroke:0;">Col Dash</div>
<div class="a" style="left:140.50px;top:400px;width:68px;height:48.6px;background:#212f8c;border:1px solid #62a8c8;border-radius:1.5px"></div>
<div class="a" style="left:141.50px;top:401px;width:66px;height:13.3px;background:#222222"></div>
<div class="a" style="left:140.50px;top:414.2px;width:68px;height:1.2px;background:#5aa4c6"></div>
<div class="t" style="left:153.01px;top:403.12px;font-size:9.5px;line-height:9.5px;color:#ececec;letter-spacing:0.3px;transform:scaleX(0.920);-webkit-text-stroke:0.15px currentColor;-webkit-text-stroke:0;">Cue Stack</div>
<div class="t" style="left:165.87px;top:417.19px;font-size:8.6px;line-height:8.6px;color:#eef0ff;letter-spacing:0.3px;transform:scaleX(0.880);-webkit-text-stroke:0.15px currentColor;-webkit-text-stroke:0;">Cue 1</div>
<div class="t" style="left:165.89px;top:428.14px;font-size:8.6px;line-height:8.6px;color:#c0c6ee;letter-spacing:0.3px;transform:scaleX(0.880);-webkit-text-stroke:0.15px currentColor;-webkit-text-stroke:0;">Cue 2</div>
<div class="t" style="left:165.85px;top:439.09px;font-size:8.6px;line-height:8.6px;color:#8a94d0;letter-spacing:0.3px;transform:scaleX(0.880);-webkit-text-stroke:0.15px currentColor;-webkit-text-stroke:0;">Cue 3</div>
<div class="a" style="left:210.25px;top:400px;width:68px;height:48.6px;background:#181818;border:1px solid #62a8c8;border-radius:1.5px"></div>
<div class="a" style="left:211.25px;top:401px;width:66px;height:13.3px;background:#222222"></div>
<div class="a" style="left:210.25px;top:414.2px;width:68px;height:1.2px;background:#5aa4c6"></div>
<div class="t" style="left:241.87px;top:403.12px;font-size:9.5px;line-height:9.5px;color:#ececec;letter-spacing:0.3px;transform:scaleX(0.920);-webkit-text-stroke:0.15px currentColor;-webkit-text-stroke:0;">4</div>
<div class="a" style="left:280.00px;top:400px;width:68px;height:48.6px;background:#074d69;border:1px solid #62a8c8;border-radius:1.5px"></div>
<div class="a" style="left:281.00px;top:401px;width:66px;height:13.3px;background:#222222"></div>
<div class="a" style="left:280.00px;top:414.2px;width:68px;height:1.2px;background:#5aa4c6"></div>
<div class="t" style="left:299.17px;top:403.12px;font-size:9.5px;line-height:9.5px;color:#ececec;letter-spacing:0.3px;transform:scaleX(0.920);-webkit-text-stroke:0.15px currentColor;-webkit-text-stroke:0;">Cue 25</div>
<div class="a" style="left:349.75px;top:400px;width:68px;height:48.6px;background:#181818;border:1px solid #62a8c8;border-radius:1.5px"></div>
<div class="a" style="left:350.75px;top:401px;width:66px;height:13.3px;background:#222222"></div>
<div class="a" style="left:349.75px;top:414.2px;width:68px;height:1.2px;background:#5aa4c6"></div>
<div class="t" style="left:381.28px;top:403.12px;font-size:9.5px;line-height:9.5px;color:#ececec;letter-spacing:0.3px;transform:scaleX(0.920);-webkit-text-stroke:0.15px currentColor;-webkit-text-stroke:0;">6</div>
<div class="a" style="left:419.50px;top:400px;width:68px;height:48.6px;background:#074d69;border:1px solid #62a8c8;border-radius:1.5px"></div>
<div class="a" style="left:420.50px;top:401px;width:66px;height:13.3px;background:#222222"></div>
<div class="a" style="left:419.50px;top:414.2px;width:68px;height:1.2px;background:#5aa4c6"></div>
<div class="t" style="left:430.83px;top:403.12px;font-size:9.5px;line-height:9.5px;color:#ececec;letter-spacing:0.3px;transform:scaleX(0.920);-webkit-text-stroke:0.15px currentColor;-webkit-text-stroke:0;">MK2 Spots</div>
<div class="a" style="left:489.25px;top:400px;width:68px;height:48.6px;background:#074d69;border:1px solid #62a8c8;border-radius:1.5px"></div>
<div class="a" style="left:490.25px;top:401px;width:66px;height:13.3px;background:#44c866"></div>
<div class="a" style="left:489.25px;top:414.2px;width:68px;height:1.2px;background:#9adcc0"></div>
<div class="t" style="left:504.55px;top:403.12px;font-size:9.5px;line-height:9.5px;color:#1b3a22;letter-spacing:0.3px;transform:scaleX(0.920);-webkit-text-stroke:0.15px currentColor;-webkit-text-stroke:0;">R2 Wash</div>
<div class="a" style="left:559.00px;top:400px;width:68px;height:48.6px;background:#074d69;border:1px solid #62a8c8;border-radius:1.5px"></div>
<div class="a" style="left:560.00px;top:401px;width:66px;height:13.3px;background:#222222"></div>
<div class="a" style="left:559.00px;top:414.2px;width:68px;height:1.2px;background:#5aa4c6"></div>
<div class="t" style="left:573.53px;top:403.12px;font-size:9.5px;line-height:9.5px;color:#ececec;letter-spacing:0.3px;transform:scaleX(0.920);-webkit-text-stroke:0.15px currentColor;-webkit-text-stroke:0;">Ov E-910</div>
<div class="a" style="left:628.75px;top:400px;width:68px;height:48.6px;background:#074d69;border:1px solid #62a8c8;border-radius:1.5px"></div>
<div class="a" style="left:629.75px;top:401px;width:66px;height:13.3px;background:#222222"></div>
<div class="a" style="left:628.75px;top:414.2px;width:68px;height:1.2px;background:#5aa4c6"></div>
<div class="t" style="left:643.89px;top:403.12px;font-size:9.5px;line-height:9.5px;color:#ececec;letter-spacing:0.3px;transform:scaleX(0.920);-webkit-text-stroke:0.15px currentColor;-webkit-text-stroke:0;">Col Dash</div>
<div class="a" style="left:705.8px;top:404.5px;width:6.2px;height:40px;background:#3ccf5a;border-radius:3.1px"></div>
</body></html>
